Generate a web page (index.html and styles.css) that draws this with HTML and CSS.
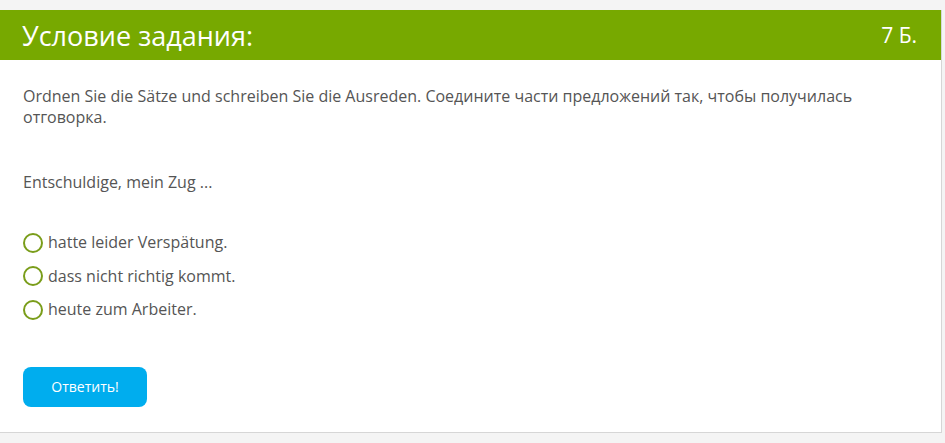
FILE: index.html
```html
<!DOCTYPE html>
<html lang="ru">
<head>
    <meta charset="UTF-8">
    <title>Условие задания</title>
    <link rel="stylesheet" href="styles.css">
</head>
<body>
<div class="task">
    <div class="task-header">
        <h2>Условие задания:</h2>
        <span class="points">7 Б.</span>
    </div>

    <div class="task-body">
        <p class="question">Ordnen Sie die Sätze und schreiben Sie die Ausreden. Соедините части предложений так, чтобы получилась отговорка.</p>

        <p class="prompt">Entschuldige, mein Zug ...</p>

        <ul class="options">
            <li><label><input type="radio" name="answer"><span class="radio"></span>hatte leider Verspätung.</label></li>
            <li><label><input type="radio" name="answer"><span class="radio"></span>dass nicht richtig kommt.</label></li>
            <li><label><input type="radio" name="answer"><span class="radio"></span>heute zum Arbeiter.</label></li>
        </ul>

        <button class="answer-btn">Ответить!</button>
    </div>
</div>
</body>
</html>
```

FILE: styles.css
```css
body {
    margin: 0;
    font-family: "Open Sans", Arial, sans-serif;
    background: #f4f4f4;
}

.task {
    width: 942px;
    margin-top: 10px;
    background: white;
    border-right: 1px solid #d6d6d6;
    border-bottom: 1px solid #d6d6d6;
    box-sizing: border-box;
}

.task-header {
    display: flex;
    justify-content: space-between;
    align-items: center;
    height: 50px;
    padding: 0 24px 0 22px;
    background: #77a900;
    color: white;
}

.task-header h2 {
    margin: 0;
    font-size: 27px;
    font-weight: normal;
}

.points {
    font-size: 21px;
}

.task-body {
    padding: 26px 23px 25px;
    color: #555;
    font-size: 16px;
    line-height: 21px;
}

.question {
    margin: 0;
    max-width: 860px;
}

.prompt {
    margin: 44px 0 0;
}

.options {
    list-style: none;
    margin: 39px 0 0;
    padding: 0;
}

.options li {
    height: 33.5px;
}

.options label {
    display: flex;
    align-items: center;
    gap: 5px;
    cursor: pointer;
}

.options input {
    display: none;
}

.radio {
    width: 16px;
    height: 16px;
    border: 2px solid #7a9d1a;
    border-radius: 50%;
}

.answer-btn {
    margin-top: 34px;
    width: 124px;
    height: 40px;
    border: none;
    border-radius: 8px;
    background: #00adee;
    color: white;
    font-family: "Open Sans", Arial, sans-serif;
    font-size: 14px;
    cursor: pointer;
}
```
